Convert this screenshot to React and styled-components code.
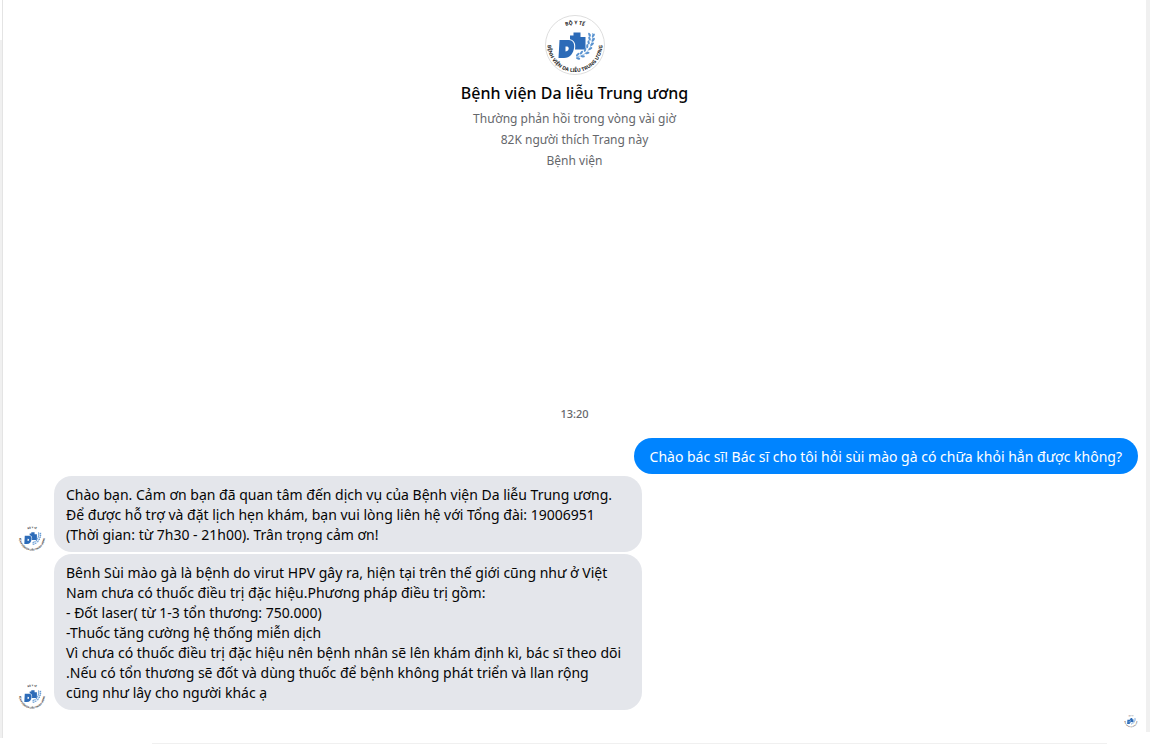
import React from 'react';
import styled, { createGlobalStyle } from 'styled-components';

const GlobalStyle = createGlobalStyle`
  * {
    box-sizing: border-box;
  }

  body {
    margin: 0;
    background: #fff;
    font-family: 'Noto Sans', 'Open Sans', sans-serif;
  }

  h1,
  p,
  ul {
    margin: 0;
    padding: 0;
  }
`;

const Page = styled.div`
  display: grid;
  grid-template-columns: 3px minmax(0, 1fr) 4px;
  min-height: 100vh;
`;

const LeftEdge = styled.div`
  margin-bottom: 7px;
  border-right: 1px solid #e4e4e4;
  background: linear-gradient(#fff 40px, #f0f0f0 40px);
`;

const ScrollTrack = styled.div`
  margin-bottom: 13px;
  background: #f0f0f0;
`;

const Conversation = styled.main`
  display: flex;
  flex-direction: column;
`;

const PageHeader = styled.header`
  display: flex;
  flex-direction: column;
  align-items: center;
  padding-top: 15px;
  text-align: center;
`;

const PageName = styled.h1`
  margin: 6px 0 3px;
  color: #050505;
  font-size: 16px;
  font-weight: 500;
  line-height: 24px;
`;

const PageInfo = styled.p`
  color: #65676b;
  font-size: 12px;
  line-height: 21px;
`;

const TimeDivider = styled.time`
  margin: 233px 0 14px;
  color: #65676b;
  font-size: 11px;
  font-weight: 500;
  line-height: 20px;
  text-align: center;
`;

const MessageList = styled.ul`
  display: flex;
  flex-direction: column;
  gap: 2px;
  padding: 0 8px 0 15px;
  list-style: none;
`;

const MessageRow = styled.li`
  display: flex;
  align-items: flex-end;
  justify-content: ${({ $own }) => ($own ? 'flex-end' : 'flex-start')};
  gap: 8px;
`;

const Bubble = styled.p`
  max-width: 588px;
  padding: ${({ $own }) => ($own ? '9px 16px 7px' : '9px 12px 7px')};
  border-radius: 18px;
  background: ${({ $own }) => ($own ? '#0084ff' : '#e4e6eb')};
  color: ${({ $own }) => ($own ? '#fff' : '#050505')};
  font-size: 14px;
  line-height: 20px;
  white-space: pre-line;
  flex: ${({ $own }) => ($own ? '0 1 auto' : '0 1 588px')};
`;

const SeenRow = styled.div`
  display: flex;
  justify-content: flex-end;
  padding: 4px 8px 0 0;
`;

const Composer = styled.footer`
  height: 2px;
  margin: auto 39px 0 149px;
  border-top: 1px solid #f0f0f0;
`;

const LogoSvg = styled.svg`
  display: block;
  flex: none;
  width: ${({ $size }) => $size}px;
  height: ${({ $size }) => $size}px;
`;

const LogoText = styled.text`
  fill: #222;
  font-family: 'Noto Sans', sans-serif;
  font-size: 5px;
  font-weight: 700;
`;

// grain pairs along the stem: x, y, angle
const GRAINS = [
  [46, 20, 4],
  [46, 24, 10],
  [45, 28, 20],
  [43.5, 32, 32],
  [41, 36, 48],
  [37, 39, 64],
  [33, 41, 78],
];

function Logo({ id, size, ring }) {
  return (
    <LogoSvg $size={size} viewBox="0 0 60 60" role="img" aria-label="Bệnh viện Da liễu Trung ương">
      <defs>
        <path id={`${id}-top`} d="M10 20A24 24 0 0 1 50 20" />
        <path id={`${id}-bottom`} d="M3 25A27.400 27.400 0 1 0 57 25" />
      </defs>
      {ring && <circle cx="30" cy="30" r="29.5" fill="#fff" stroke="#dedede" />}
      <LogoText textAnchor="middle">
        <textPath href={`#${id}-top`} startOffset="50%">BỘ Y TẾ</textPath>
      </LogoText>
      <LogoText textAnchor="middle">
        <textPath href={`#${id}-bottom`} startOffset="50%">BỆNH VIỆN DA LIỄU TRUNG ƯƠNG</textPath>
      </LogoText>
      <path
        fill="#2c6bb8"
        fillRule="evenodd"
        d="M14.500 25H24C27.500 25 29.500 28 29.200 32C28.500 38.500 25 43 19 43H13.500ZM20.500 31.500V36.500C23 36 24 34.500 23.700 33C23.300 31.500 22 31.300 20.500 31.500Z"
      />
      <path fill="#2c6bb8" d="M28.500 17.500H35.500V22H40.500V34.500H30C31 29 29.500 25 25 24.200V20.500H28.500Z" />
      <path d="M47.500 18C48.500 31 43 40.500 31 42" fill="none" stroke="#8ab5e0" strokeWidth="0.8" />
      {GRAINS.map(([x, y, angle]) => (
        <g key={y} transform={`translate(${x} ${y}) rotate(${angle})`} fill="#5a93d0">
          <ellipse cx="-1.3" cy="-0.8" rx="1.1" ry="2.2" transform="rotate(-28)" />
          <ellipse cx="2.3" cy="-0.8" rx="1.1" ry="2.2" transform="rotate(28)" />
        </g>
      ))}
    </LogoSvg>
  );
}

const pageInfo = ['Thường phản hồi trong vòng vài giờ', '82K người thích Trang này', 'Bệnh viện'];

const messages = [
  {
    id: 'm1',
    own: true,
    text: 'Chào bác sĩ! Bác sĩ cho tôi hỏi sùi mào gà có chữa khỏi hẳn được không?',
  },
  {
    id: 'm2',
    text: `Chào bạn. Cảm ơn bạn đã quan tâm đến dịch vụ của Bệnh viện Da liễu Trung ương.
Để được hỗ trợ và đặt lịch hẹn khám, bạn vui lòng liên hệ với Tổng đài: 19006951
(Thời gian: từ 7h30 - 21h00). Trân trọng cảm ơn!`,
  },
  {
    id: 'm3',
    text: `Bênh Sùi mào gà là bệnh do virut HPV gây ra, hiện tại trên thế giới cũng như ở Việt
Nam chưa có thuốc điều trị đặc hiệu.Phương pháp điều trị gồm:
- Đốt laser( từ 1-3 tổn thương: 750.000)
-Thuốc tăng cường hệ thống miễn dịch
Vì chưa có thuốc điều trị đặc hiệu nên bệnh nhân sẽ lên khám định kì, bác sĩ theo dõi
.Nếu có tổn thương sẽ đốt và dùng thuốc để bệnh không phát triển và llan rộng
cũng như lây cho người khác ạ`,
  },
];

function App() {
  return (
    <>
      <GlobalStyle />
      <Page>
        <LeftEdge />
        <Conversation>
          <PageHeader>
            <Logo id="header" size={60} ring />
            <PageName>Bệnh viện Da liễu Trung ương</PageName>
            {pageInfo.map((line) => (
              <PageInfo key={line}>{line}</PageInfo>
            ))}
          </PageHeader>
          <TimeDivider>13:20</TimeDivider>
          <MessageList>
            {messages.map(({ id, own, text }) => (
              <MessageRow key={id} $own={own}>
                {!own && <Logo id={id} size={28} />}
                <Bubble $own={own}>{text}</Bubble>
              </MessageRow>
            ))}
          </MessageList>
          <SeenRow>
            <Logo id="seen" size={14} />
          </SeenRow>
          <Composer />
        </Conversation>
        <ScrollTrack />
      </Page>
    </>
  );
}

export default App;
